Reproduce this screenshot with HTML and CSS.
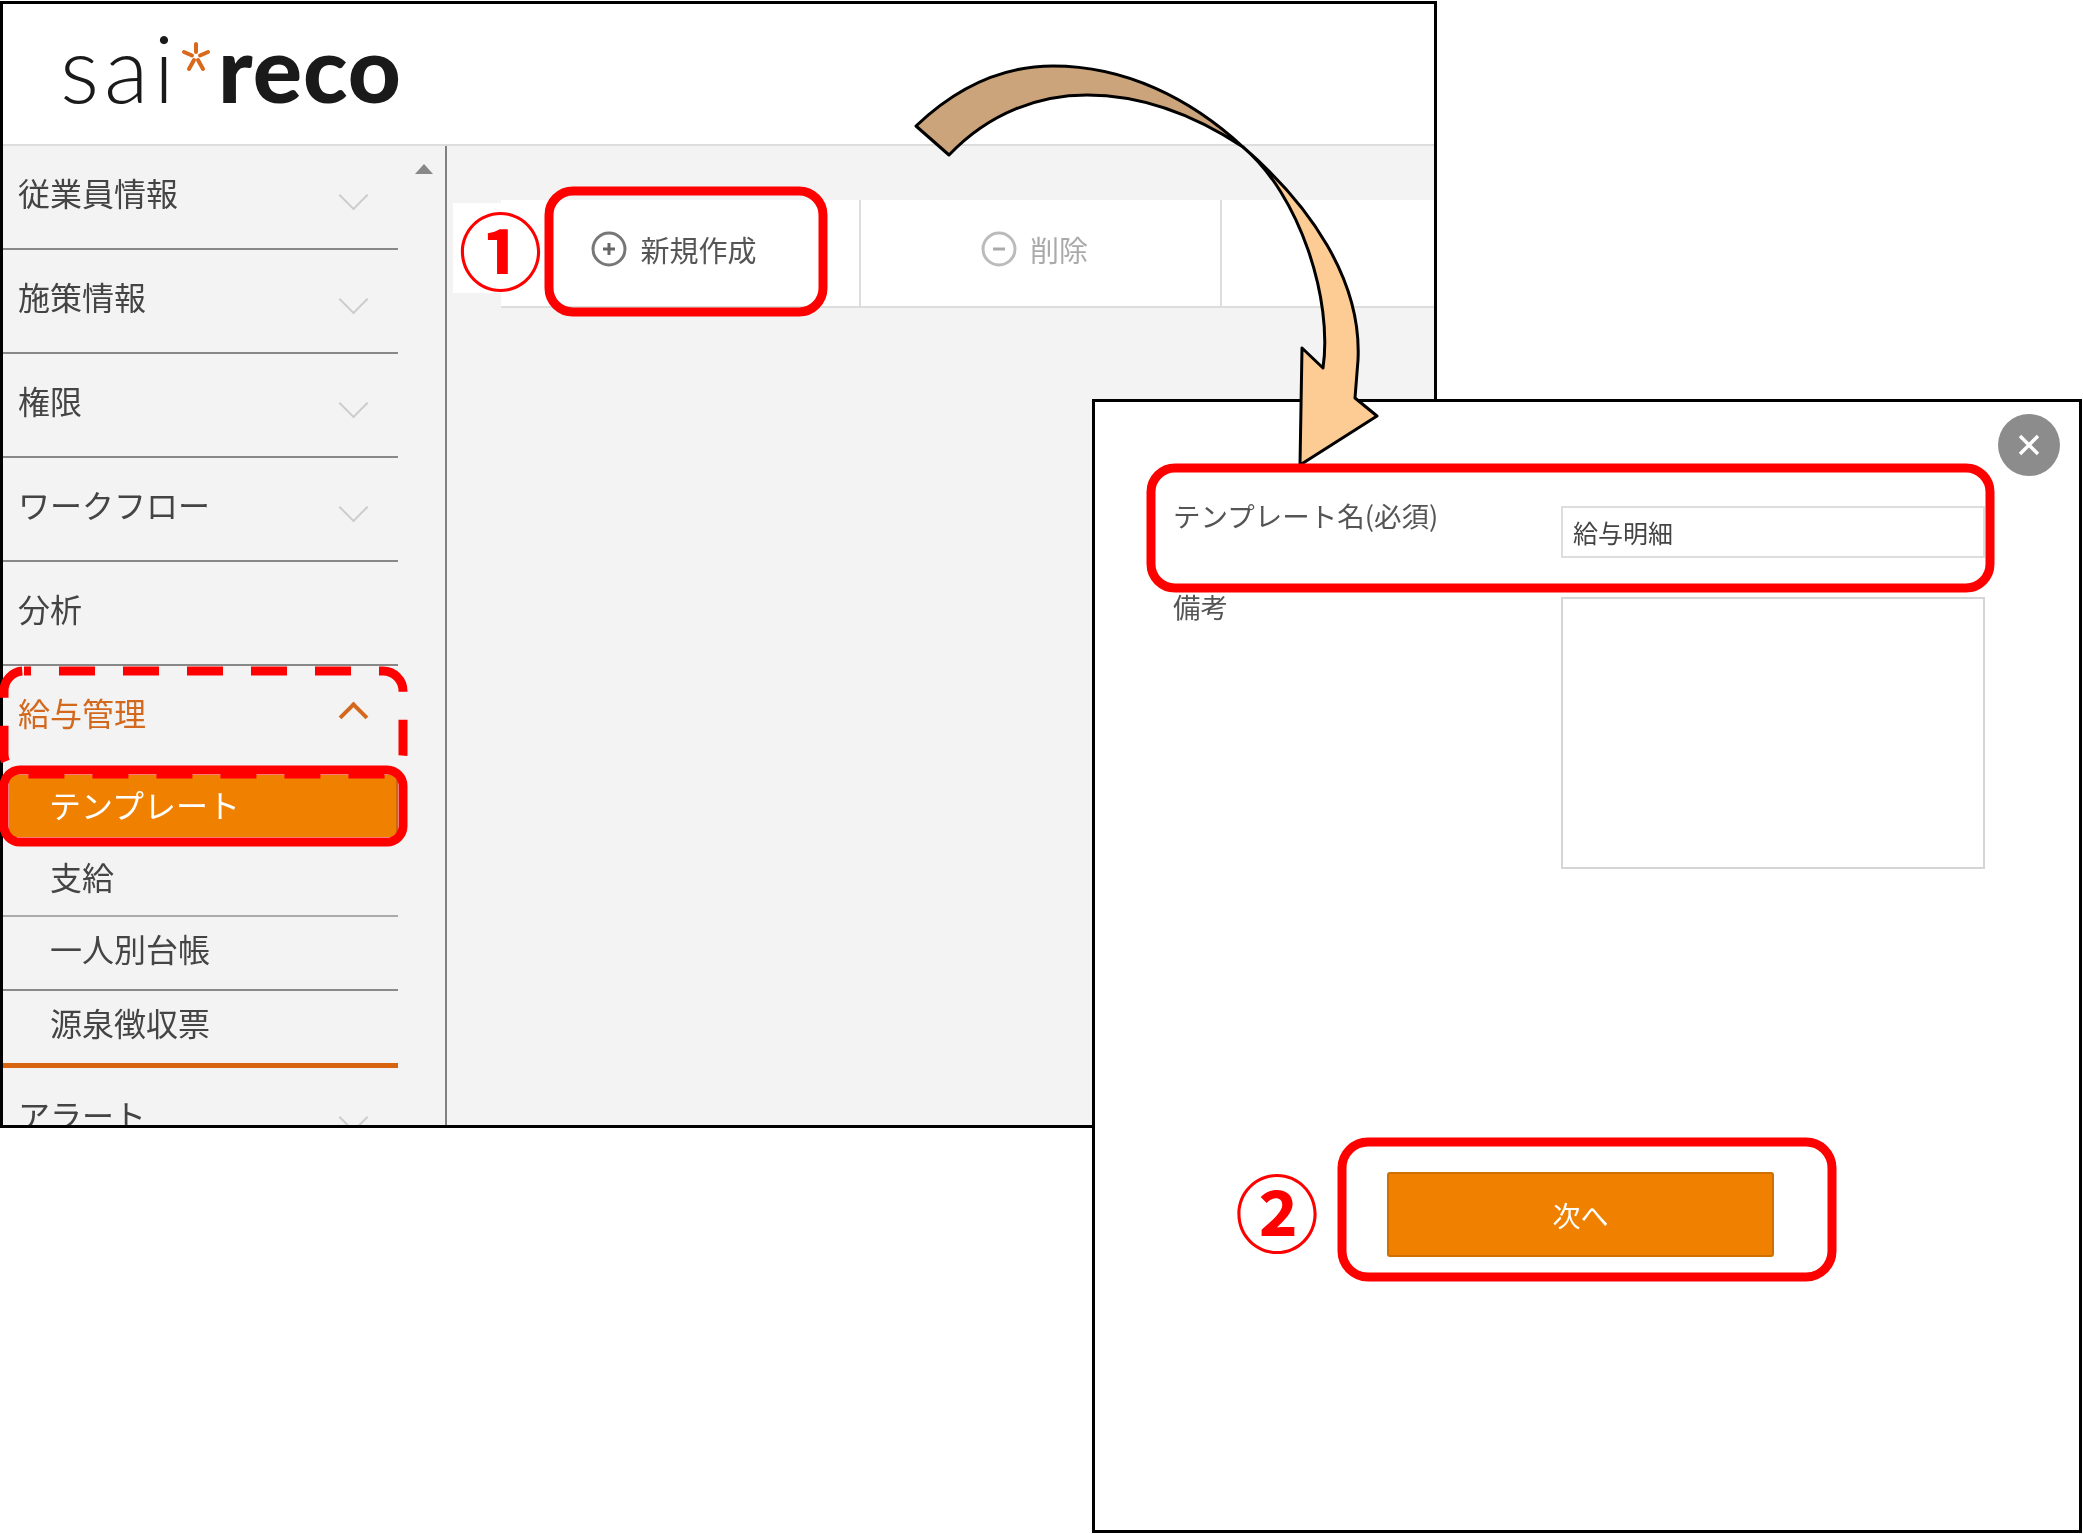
FILE: index.html
```html
<!DOCTYPE html>
<html lang="ja">
<head>
    <meta charset="UTF-8">
    <meta name="viewport" content="width=device-width, initial-scale=1.0">
    <title>sai*reco テンプレート</title>
    <link rel="stylesheet" href="styles.css">
</head>
<body>
    <div class="app-window">
        <header class="app-header">
            <div class="logo">
                <span class="logo-sai">sai</span>
                <svg class="logo-star" viewBox="0 0 30 30" width="30" height="30">
                    <path d="M15 2V10M3 10L11 13.5M27 10L19 13.5M8 27L13 18M22 27L17 18" fill="none" stroke="#d9681c" stroke-width="4" stroke-linecap="round"/>
                </svg>
                <span class="logo-reco">reco</span>
            </div>
        </header>

        <div class="app-body">
            <nav class="sidebar">
                <ul class="menu">
                    <li class="menu-item"><span>従業員情報</span><i class="chevron"></i></li>
                    <li class="menu-item"><span>施策情報</span><i class="chevron"></i></li>
                    <li class="menu-item"><span>権限</span><i class="chevron"></i></li>
                    <li class="menu-item"><span>ワークフロー</span><i class="chevron"></i></li>
                    <li class="menu-item"><span>分析</span></li>
                    <li class="menu-item menu-open"><span>給与管理</span><i class="chevron chevron-up"></i></li>
                    <li class="sub-item sub-active">テンプレート</li>
                    <li class="sub-item sub-pay">支給</li>
                    <li class="sub-item sub-ledger">一人別台帳</li>
                    <li class="sub-item sub-last">源泉徴収票</li>
                    <li class="menu-item"><span>アラート</span><i class="chevron"></i></li>
                </ul>
                <div class="scroll-col"><i class="scroll-up"></i></div>
            </nav>

            <main class="content">
                <div class="toolbar">
                    <div class="tool-btn">
                        <svg class="tool-icon" viewBox="0 0 36 36" width="36" height="36">
                            <circle cx="18" cy="18" r="16" fill="none" stroke="#777" stroke-width="3"/>
                            <path d="M18 12V24M12 18H24" stroke="#666" stroke-width="3"/>
                        </svg>
                        <span>新規作成</span>
                    </div>
                    <div class="tool-btn tool-off">
                        <svg class="tool-icon" viewBox="0 0 36 36" width="36" height="36">
                            <circle cx="18" cy="18" r="16" fill="none" stroke="#bbb" stroke-width="3"/>
                            <path d="M12 18H24" stroke="#aaa" stroke-width="3"/>
                        </svg>
                        <span>削除</span>
                    </div>
                </div>
            </main>
        </div>
    </div>

    <section class="modal">
        <div class="modal-top">
            <div class="modal-close">
                <svg viewBox="0 0 24 24" width="24" height="24">
                    <path d="M3 3L21 21M21 3L3 21" stroke="#fff" stroke-width="3.4"/>
                </svg>
            </div>
        </div>
        <div class="form-row">
            <label class="form-label">テンプレート名(必須)</label>
            <div class="form-input">給与明細</div>
        </div>
        <div class="form-row">
            <label class="form-label">備考</label>
            <div class="form-textarea"></div>
        </div>
        <div class="next-btn">次へ</div>
    </section>

    <svg class="marks" viewBox="0 0 2083 1534" width="2083" height="1534">
        <path d="M916 126C960 84 1006 66 1053 66C1125 66 1190 98 1243 147C1190 112 1140 95 1087 95C1040 95 990 112 949 155Z" fill="#cca47b" stroke="#000" stroke-width="3" stroke-linejoin="round"/>
        <path d="M1243 147C1310 205 1362 280 1358 360L1355 398L1377 416L1300 465L1302 348L1323 368C1333 300 1300 195 1243 147Z" fill="#fdcb94" stroke="#000" stroke-width="3" stroke-linejoin="round"/>
        <rect class="mark-box" x="549" y="191" width="274" height="121" rx="24"/>
        <rect class="mark-box" x="1151" y="468" width="839" height="120" rx="24"/>
        <rect class="mark-box" x="1342" y="1142" width="490" height="135" rx="26"/>
        <rect class="mark-box mark-dash" x="4" y="671" width="399" height="103" rx="20"/>
        <rect class="mark-box" x="4" y="770" width="399" height="72" rx="16"/>
    </svg>
    <span class="mark-num mark-one">①</span>
    <span class="mark-num mark-two">②</span>
</body>
</html>
```

FILE: styles.css
```css
* {
    box-sizing: border-box;
}

body {
    position: relative;
    width: 2083px;
    height: 1534px;
    margin: 0;
    overflow: hidden;
    background-color: white;
    font-family: "Noto Sans CJK JP", "Noto Sans", sans-serif;
    color: #444;
}

ul {
    margin: 0;
    padding: 0;
    list-style: none;
}

/* the reference is an enlarged capture, so its app parts are soft */
.logo,
.menu,
.toolbar,
.modal-close,
.form-row,
.next-btn {
    filter: blur(0.6px);
}

/* app window */
.app-window {
    width: 1437px;
    height: 1127px;
    margin-top: 1px;
    border: 3px solid #000;
    display: flex;
    flex-direction: column;
    overflow: hidden;
}

.app-header {
    height: 142px;
    flex-shrink: 0;
    padding-left: 57px;
    border-bottom: 2px solid #ddd;
    display: flex;
    align-items: center;
}

.logo {
    display: flex;
    align-items: baseline;
    color: #1a1a1a;
    font-family: Lato, sans-serif;
    font-size: 92px;
    line-height: 1;
    margin-top: -12px;
}

.logo-sai {
    font-weight: 300;
    letter-spacing: 5px;
}

.logo-star {
    align-self: flex-start;
    margin: 20px 7px 0 2px;
}

.logo-reco {
    font-weight: 900;
    letter-spacing: 1px;
}

.app-body {
    flex: 1;
    display: flex;
    min-height: 0;
}

/* sidebar */
.sidebar {
    width: 444px;
    flex-shrink: 0;
    display: flex;
    background-color: #f3f3f3;
    border-right: 2px solid #808080;
}

.menu {
    width: 395px;
    flex-shrink: 0;
}

.menu-item {
    height: 104px;
    padding: 0 30px 10px 15px;
    border-bottom: 2px solid #888;
    display: flex;
    align-items: center;
    justify-content: space-between;
    font-size: 32px;
}

.chevron {
    width: 21px;
    height: 21px;
    transform: translateY(-3px) rotate(45deg);
    border-right: 2px solid #ccc;
    border-bottom: 2px solid #ccc;
    position: relative;
    top: 6px;
    right: 4px;
}

.menu-open {
    height: 109px;
    padding-bottom: 18px;
    border-bottom: 0;
    color: #d2691e;
}

.chevron-up {
    top: 0;
    transform: translateY(5px) rotate(225deg);
    border-color: #d2691e;
    border-width: 4px;
}

.sub-item {
    height: 74px;
    padding: 0 0 6px 47px;
    border-bottom: 2px solid #8a8a8a;
    display: flex;
    align-items: center;
    font-size: 32px;
}

.sub-active {
    height: 62px;
    margin-left: 6px;
    padding: 0 0 4px 40px;
    border-bottom: 0;
    border-right: 2px solid #c96a0a;
    background-color: #f08000;
    color: white;
}

.sub-pay {
    height: 80px;
    padding-bottom: 0;
    border-bottom-color: #aaa;
}

.sub-ledger {
    padding-bottom: 10px;
}

.sub-last {
    height: 77px;
    padding-bottom: 10px;
    border-bottom: 5px solid #d9640f;
}

.scroll-col {
    flex: 1;
    padding: 18px 0 0 17px;
}

.scroll-up {
    display: block;
    width: 0;
    height: 0;
    border-left: 9px solid transparent;
    border-right: 9px solid transparent;
    border-bottom: 10px solid #888;
}

/* main area */
.content {
    flex: 1;
    background-color: #f3f3f3;
    padding: 54px 0 0 54px;
}

.toolbar {
    height: 108px;
    display: flex;
    background-color: white;
    border-bottom: 2px solid #ddd;
}

.tool-btn {
    width: 360px;
    padding: 0 12px 8px 0;
    border-right: 2px solid #ddd;
    display: flex;
    align-items: center;
    justify-content: center;
    gap: 13px;
    font-size: 29px;
    color: #555;
}

.tool-off {
    width: 361px;
    color: #aaa;
}

/* dialog lying over the app window */
.modal {
    position: absolute;
    left: 1092px;
    top: 399px;
    width: 990px;
    height: 1134px;
    padding: 1px 19px 0 79px;
    background-color: white;
    border: 3px solid #000;
}

.modal-top {
    padding-top: 11px;
    display: flex;
    justify-content: flex-end;
}

.modal-close {
    width: 62px;
    height: 62px;
    border-radius: 50%;
    background-color: #8c8c8c;
    display: flex;
    align-items: center;
    justify-content: center;
}

.form-row {
    margin-top: 30px;
    display: flex;
    color: #555;
}

.form-row + .form-row {
    margin-top: 39px;
}

.form-label {
    width: 388px;
    margin: -8px 0 0 -1px;
    font-size: 27.5px;
    line-height: 1.3;
}

.form-input {
    width: 424px;
    height: 52px;
    padding: 0 0 1px 10px;
    border: 2px solid #ddd;
    display: flex;
    align-items: center;
    font-size: 25px;
    color: #444;
}

.form-textarea {
    width: 424px;
    height: 272px;
    border: 2px solid #d5d5d5;
}

.next-btn {
    width: 387px;
    height: 85px;
    margin: 303px 0 0 213px;
    border: 2px solid #cf6f00;
    border-radius: 3px;
    background-color: #f08000;
    display: flex;
    align-items: center;
    justify-content: center;
    font-size: 28px;
    color: white;
}

/* red annotations */
.marks {
    position: absolute;
    left: 0;
    top: 0;
}

.mark-box {
    fill: none;
    stroke: #ff0000;
    stroke-width: 9;
}

.mark-dash {
    stroke-dasharray: 36 28;
    stroke-dashoffset: -35;
}

.mark-num {
    position: absolute;
    display: flex;
    align-items: center;
    justify-content: center;
    font-size: 84px;
    font-weight: 700;
    line-height: 1;
    color: #ff0000;
}

.mark-one {
    left: 453px;
    top: 203px;
    width: 90px;
    height: 90px;
    padding-left: 5px;
    background-color: white;
}

.mark-two {
    left: 1232px;
    top: 1165px;
    width: 90px;
    height: 90px;
}
```
